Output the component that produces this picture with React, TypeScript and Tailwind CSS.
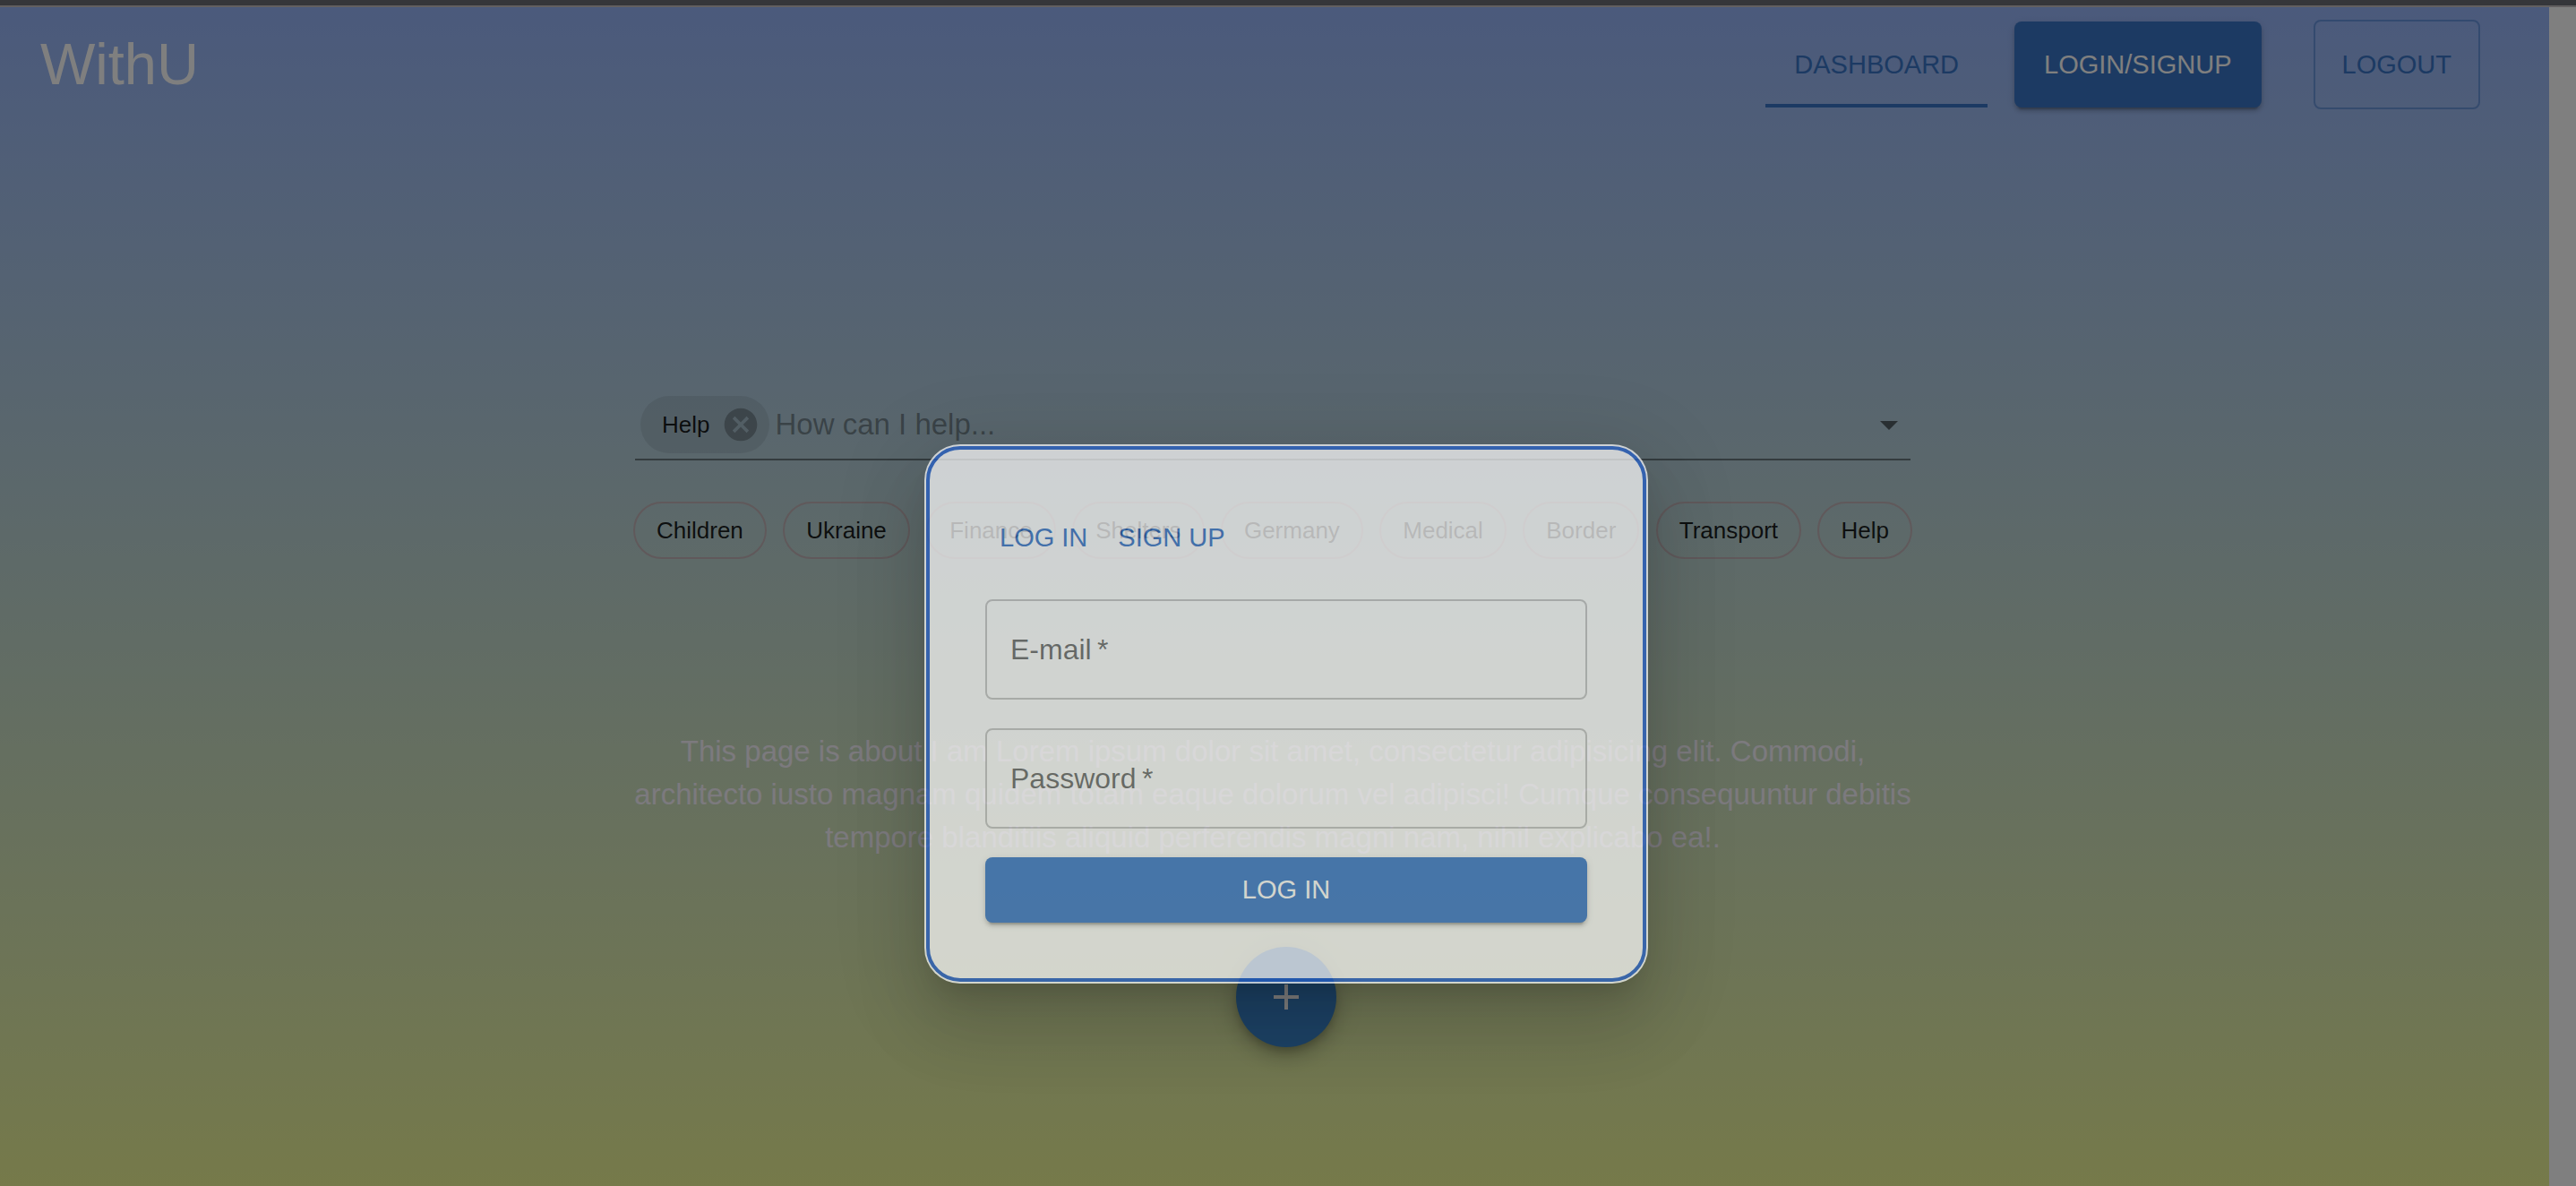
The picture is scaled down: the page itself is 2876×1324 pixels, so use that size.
import React from "react";

const topics = [
  "Children",
  "Ukraine",
  "Finance",
  "Shelters",
  "Germany",
  "Medical",
  "Border",
  "Transport",
  "Help",
];

const raised =
  "shadow-[0_6px_2px_-4px_rgba(0,0,0,0.2),0_4px_4px_0_rgba(0,0,0,0.14),0_2px_10px_0_rgba(0,0,0,0.12)]";

function Header() {
  return (
    <header className="flex h-32 items-center justify-between pl-[45px] pr-[77px]">
      <h1 className="pb-0.5 text-[65px] leading-none text-white">WithU</h1>
      <nav className="flex items-center text-[29px] text-[#3874c6]">
        <a
          href="#dashboard"
          className="mr-[30px] flex h-24 items-center border-b-4 border-[#3874c6] px-8 pt-1.5"
        >
          DASHBOARD
        </a>
        <button
          type="button"
          className={`mr-[58px] h-24 rounded-lg bg-[#3874c6] px-[33px] pt-0.5 text-white ${raised}`}
        >
          LOGIN/SIGNUP
        </button>
        <button
          type="button"
          className="h-[100px] rounded-lg border-2 border-[#3874c6]/50 px-[30px] pt-0.5"
        >
          LOGOUT
        </button>
      </nav>
    </header>
  );
}

function SearchBar() {
  return (
    <div className="mx-0.5 flex items-center border-b-2 border-black/42 pb-1.5 pl-1.5">
      <span className="flex h-16 items-center rounded-full bg-black/8 pl-6 pr-2.5 text-[26px] text-black/87">
        Help
        <button type="button" aria-label="Remove Help" className="ml-[13px]">
          <svg viewBox="0 0 24 24" className="size-11 fill-black/26">
            <path d="M12 2C6.47 2 2 6.47 2 12s4.47 10 10 10 10-4.47 10-10S17.53 2 12 2zm5 13.59L15.59 17 12 13.41 8.41 17 7 15.59 10.59 12 7 8.41 8.41 7 12 10.59 15.59 7 17 8.41 13.41 12 17 15.59z" />
          </svg>
        </button>
      </span>
      <input
        type="text"
        aria-label="How can I help"
        placeholder="How can I help..."
        className="ml-1.5 min-w-0 flex-1 bg-transparent text-[33px] leading-[48px] outline-none placeholder:text-black/37"
      />
      <button type="button" aria-label="Open topics">
        <svg viewBox="0 0 24 24" className="size-12 fill-black/54">
          <path d="M7 10l5 5 5-5z" />
        </svg>
      </button>
    </div>
  );
}

function Field({ id, label, type }: { id: string; label: string; type: string }) {
  return (
    <div className="relative">
      <label
        htmlFor={id}
        className="pointer-events-none absolute inset-y-0 left-7 flex items-center text-[32px] text-black/60"
      >
        {label}&thinsp;*
      </label>
      <input
        id={id}
        type={type}
        required
        className="block h-28 w-full rounded-lg border-2 border-black/23 bg-transparent px-7 text-[32px] shadow-none outline-none"
      />
    </div>
  );
}

function LoginDialog() {
  return (
    <div
      role="dialog"
      aria-modal="true"
      aria-label="Log in"
      className="w-[808px] rounded-[40px] bg-white p-[68px] opacity-70 shadow-[0_22px_30px_-14px_rgba(0,0,0,0.2),0_48px_76px_6px_rgba(0,0,0,0.14),0_18px_92px_16px_rgba(0,0,0,0.12)] outline-4 -outline-offset-[6px] outline-[#2460cc]"
    >
      <form className="flex flex-col gap-8 text-[29px]">
        <div className="flex h-[73px] text-[#3874c6]">
          <button type="button" className="px-4">
            LOG IN
          </button>
          <button type="button" className="px-[18px]">
            SIGN UP
          </button>
        </div>
        <Field id="email" label="E-mail" type="email" />
        <Field id="password" label="Password" type="password" />
        <button
          type="submit"
          className={`h-[73px] rounded-lg bg-[#3877c9] text-white ${raised}`}
        >
          LOG IN
        </button>
      </form>
    </div>
  );
}

export default function App() {
  return (
    <div className="flex min-h-screen flex-col font-['Liberation_Sans',Arial,sans-serif]">
      <div className="h-2 border-b-2 border-[#625f60] bg-[#35363a]" />
      <div className="relative flex flex-1">
        <div className="min-w-0 flex-1 bg-linear-to-b from-[#96b4f8] to-[#ecf494]">
          <Header />
          <main className="pr-1 pt-[306px]">
            <div className="mx-auto max-w-[1428px]">
              <SearchBar />
              <ul className="mt-[46px] flex justify-between">
                {topics.map((topic) => (
                  <li key={topic}>
                    <button
                      type="button"
                      className="h-16 rounded-full border-2 border-[#c0b2b6] px-6 text-[26px] text-black/87"
                    >
                      {topic}
                    </button>
                  </li>
                ))}
              </ul>
              <p className="mt-[191px] text-center text-[33px] leading-[48px] text-[#f8f4fc]">
                This page is about I am Lorem ipsum dolor sit amet, consectetur
                adipisicing elit. Commodi, architecto iusto magnam quidem totam
                eaque dolorum vel adipisci! Cumque consequuntur debitis tempore
                blanditiis aliquid perferendis magni nam, nihil explicabo ea!.
              </p>
            </div>
          </main>
          <div className="mt-[98px] flex justify-center pl-[26px]">
            <button
              type="button"
              aria-label="Add"
              className="flex size-28 items-center justify-center rounded-full bg-[#3a84ca] shadow-[0_6px_10px_-2px_rgba(0,0,0,0.2),0_12px_20px_0_rgba(0,0,0,0.14),0_2px_36px_0_rgba(0,0,0,0.12)]"
            >
              <svg viewBox="0 0 24 24" className="size-12 fill-white">
                <path d="M19 13h-6v6h-2v-6H5v-2h6V5h2v6h6v2z" />
              </svg>
            </button>
          </div>
        </div>
        <div className="w-[30px] bg-white" />
        <div className="absolute inset-0 flex items-start justify-center bg-black/50 pr-1 pt-[488px]">
          <LoginDialog />
        </div>
      </div>
    </div>
  );
}
